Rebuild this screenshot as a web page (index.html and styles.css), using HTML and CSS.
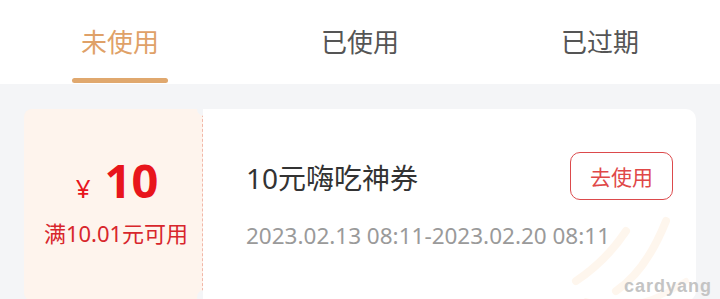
FILE: index.html
```html
<!DOCTYPE html>
<html lang="zh">
<head>
<meta charset="utf-8">
<link rel="stylesheet" href="styles.css">
</head>
<body>
<div class="tabs">
  <div class="tab active"><span>未使用</span></div>
  <div class="tab"><span>已使用</span></div>
  <div class="tab"><span>已过期</span></div>
</div>
<div class="list">
  <div class="coupon">
    <div class="stub">
      <div class="amount"><span class="yen">¥</span><span class="num">10</span></div>
      <div class="cond">满10.01元可用</div>
    </div>
    <span class="notch notch-top"></span>
    <span class="notch notch-bottom"></span>
    <div class="main">
      <div class="row">
        <div class="title">10元嗨吃神券</div>
        <div class="btn">去使用</div>
      </div>
      <div class="date">2023.02.13 08:11-2023.02.20 08:11</div>
      <svg class="stamp" width="140" height="130" viewBox="0 0 140 130">
        <path d="M10 90 Q40 70 60 40" stroke="#fdebd8" stroke-width="8" fill="none" stroke-linecap="round"/>
        <path d="M50 100 Q80 80 100 30" stroke="#fdebd8" stroke-width="8" fill="none" stroke-linecap="round"/>
        <path d="M20 110 Q70 125 120 90" stroke="#fdeedf" stroke-width="6" fill="none" stroke-linecap="round"/>
      </svg>
    </div>
  </div>
</div>
<div class="mark">cardyang</div>
</body>
</html>
```
FILE: styles.css
```css
html, body {
  margin: 0;
  padding: 0;
}
body {
  width: 720px;
  height: 299px;
  overflow: hidden;
  background: #f4f5f7;
  font-family: "Noto Sans", "Noto Sans CJK SC", sans-serif;
  position: relative;
}
.tabs {
  display: grid;
  grid-template-columns: repeat(3, 1fr);
  height: 84px;
  background: #fff;
}
.tab {
  display: flex;
  justify-content: center;
  align-items: center;
  font-size: 26px;
  color: #555;
  position: relative;
  padding-bottom: 2px;
}
.tab.active {
  color: #dfa168;
}
.tab.active::after {
  content: "";
  position: absolute;
  left: 72px;
  bottom: 1px;
  width: 96px;
  height: 5px;
  border-radius: 3px;
  background: #e0a86e;
}
.list {
  padding: 25px 24px 0;
}
.coupon {
  display: flex;
  position: relative;
  height: 192px;
}
.stub {
  width: 179px;
  background: #fef4ed;
  border-radius: 8px 0 0 8px;
  border-right: 1px dashed #f2b7a8;
  display: flex;
  flex-direction: column;
  align-items: center;
  justify-content: center;
  padding: 0 0 6px 6px;
  box-sizing: border-box;
}
.amount {
  display: flex;
  align-items: baseline;
  color: #e8151c;
  line-height: 1;
  padding-left: 2px;
}
.yen {
  font-size: 26px;
  margin-right: 14px;
}
.num {
  font-size: 47px;
  font-weight: 700;
}
.cond {
  margin-top: 12px;
  font-size: 22px;
  color: #d8262c;
}
.notch {
  position: absolute;
  left: 173px;
  width: 14px;
  height: 14px;
  border-radius: 50%;
  background: #f4f5f7;
}
.notch-top { top: -7px; }
.notch-bottom { bottom: -3px; }
.main {
  flex: 1;
  background: #fff;
  border-radius: 0 10px 10px 0;
  padding: 43px 23px 0 43px;
  position: relative;
  overflow: hidden;
}
.row {
  display: flex;
  justify-content: space-between;
  align-items: center;
  position: relative;
  z-index: 1;
}
.title {
  font-size: 28px;
  color: #333;
  padding-top: 2px;
}
.btn {
  width: 101px;
  height: 46px;
  border: 1px solid #dc4a4c;
  border-radius: 10px;
  color: #e04848;
  font-size: 21px;
  display: flex;
  align-items: center;
  justify-content: center;
}
.date {
  margin-top: 20px;
  font-size: 22.5px;
  color: #9a9a9a;
  position: relative;
  z-index: 1;
}
.stamp {
  position: absolute;
  right: -10px;
  bottom: -20px;
  opacity: 0.45;
}
.mark {
  position: absolute;
  right: 8px;
  bottom: 2px;
  font-family: "Liberation Sans", sans-serif;
  font-weight: 700;
  font-size: 18px;
  letter-spacing: 1px;
  color: #c4c4c4;
}
```
